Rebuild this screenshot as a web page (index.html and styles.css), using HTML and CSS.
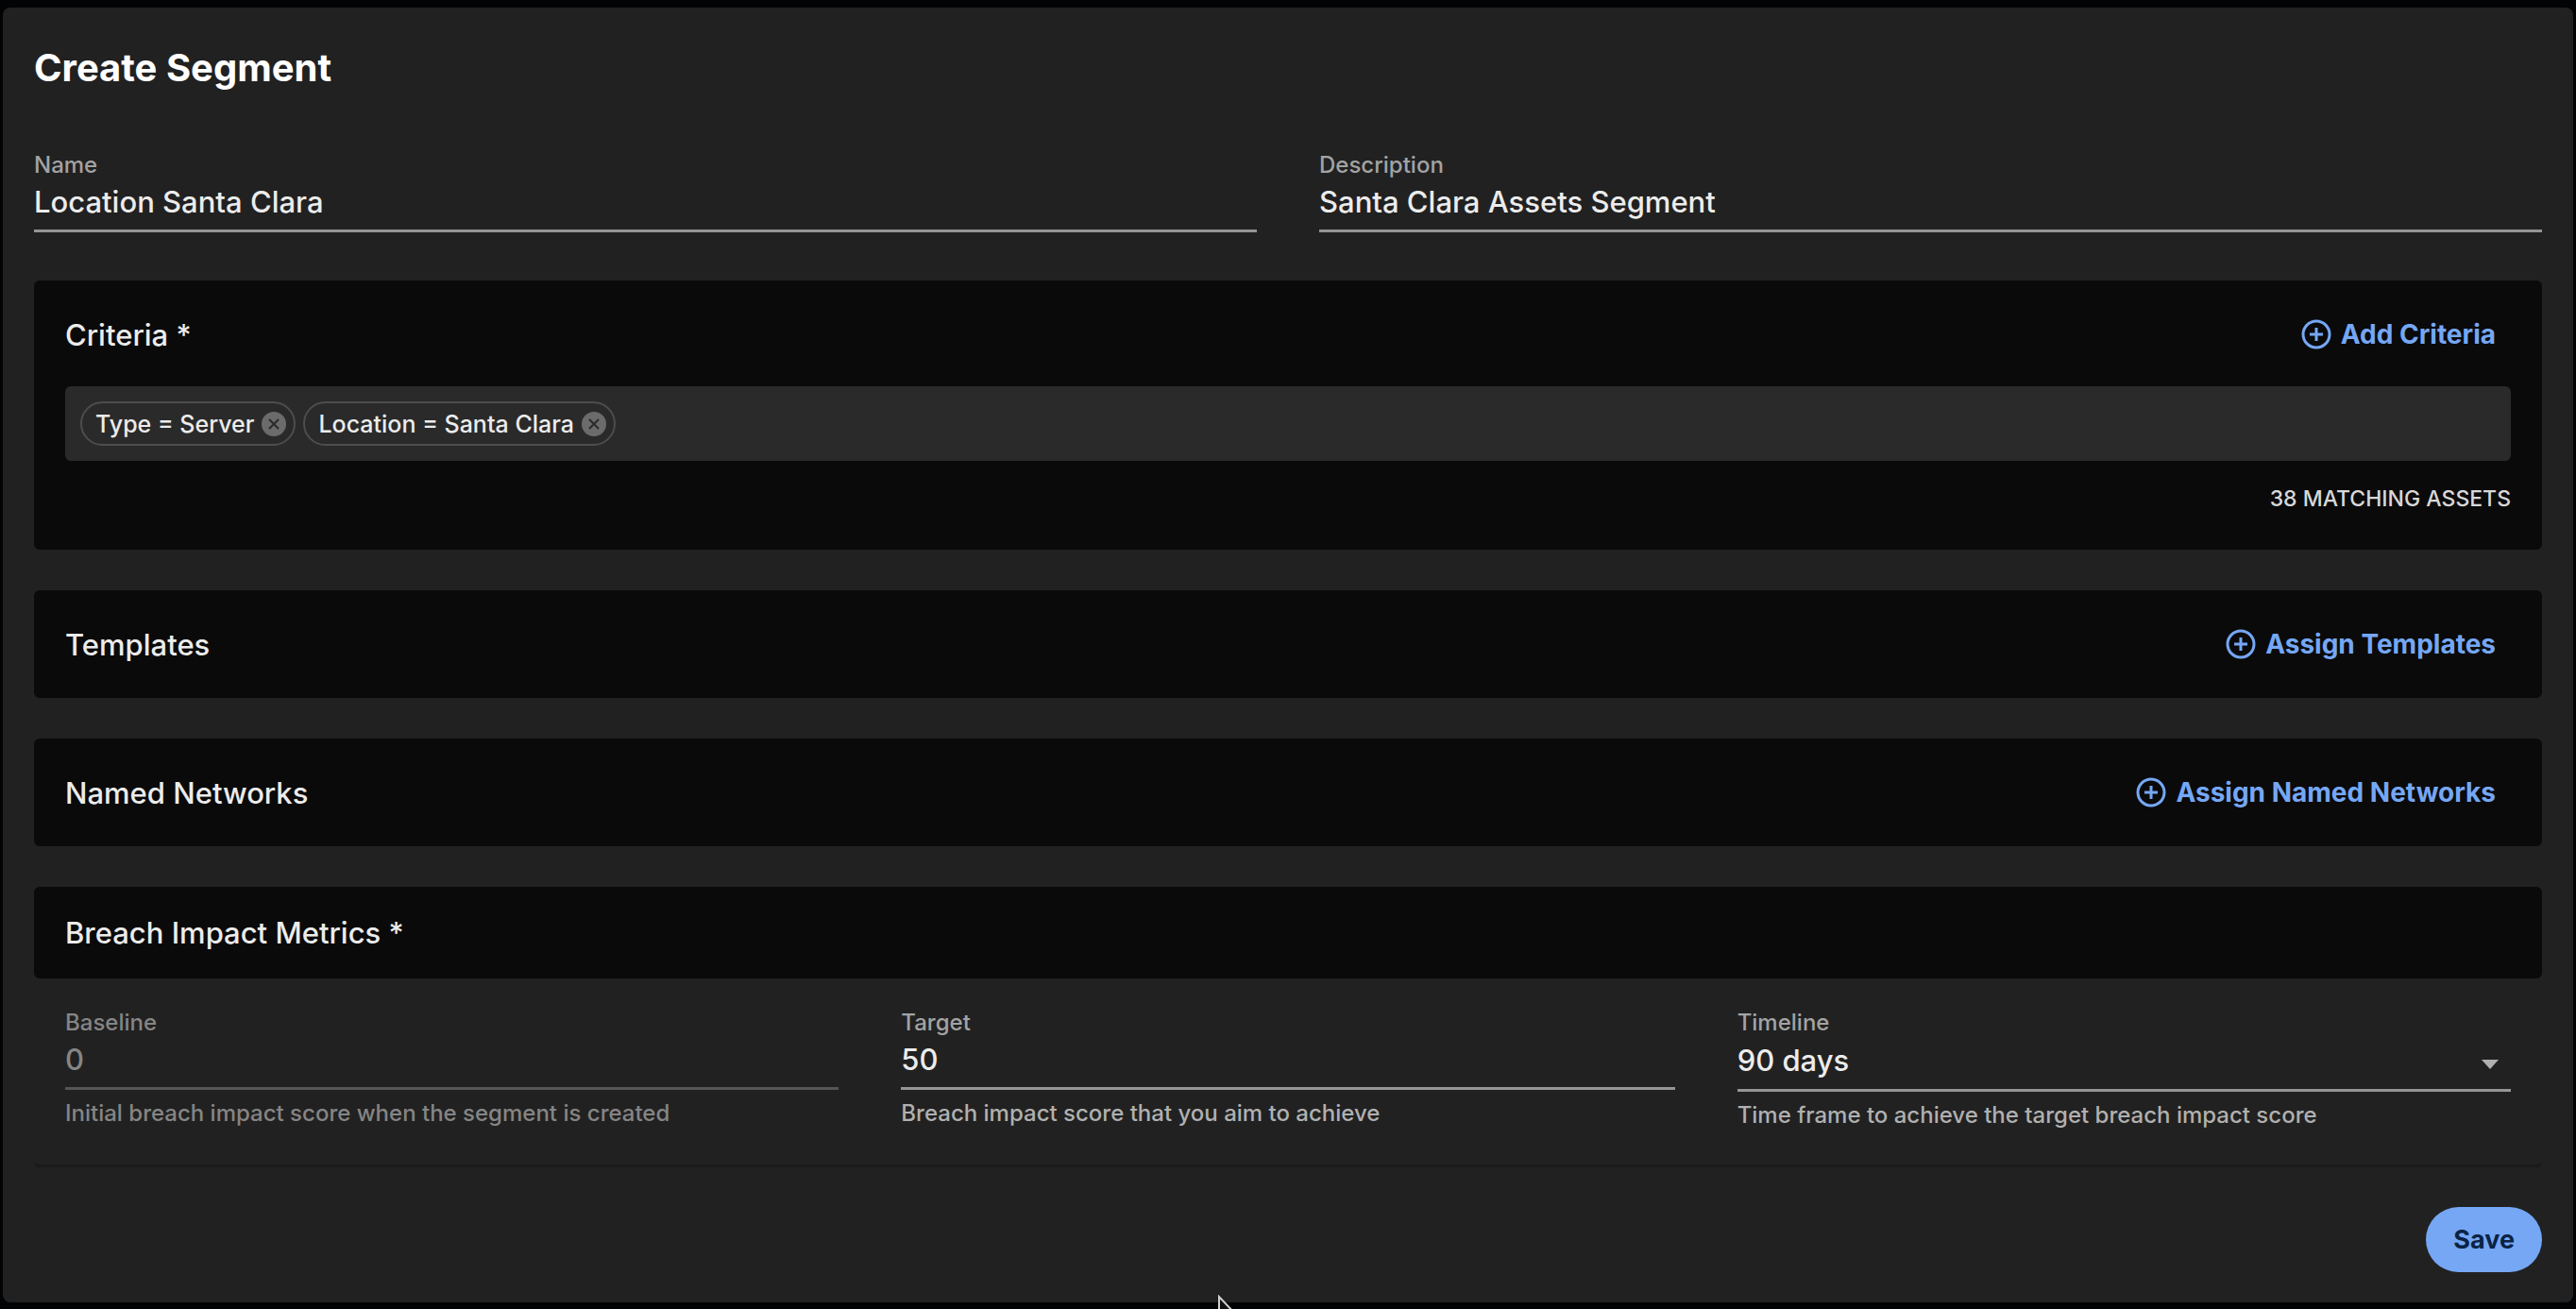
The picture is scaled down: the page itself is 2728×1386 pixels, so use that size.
FILE: index.html
```html
<!DOCTYPE html>
<html lang="en">
<head>
    <meta charset="UTF-8">
    <meta name="viewport" content="width=device-width, initial-scale=1.0">
    <title>Create Segment</title>
    <link rel="stylesheet" href="styles.css">
</head>
<body>
    <form class="panel">
        <h1>Create Segment</h1>

        <div class="fields details">
            <div class="field">
                <label for="name">Name</label>
                <input type="text" id="name" value="Location Santa Clara">
            </div>
            <div class="field">
                <label for="description">Description</label>
                <input type="text" id="description" value="Santa Clara Assets Segment">
            </div>
        </div>

        <!-- Criteria -->
        <section class="card">
            <div class="card-header">
                <h2>Criteria *</h2>
                <button type="button" class="link-button">
                    <svg class="plus-icon" viewBox="0 0 32 32"><circle cx="16" cy="16" r="14"/><path d="M16 9v14M9 16h14"/></svg>
                    Add Criteria
                </button>
            </div>
            <div class="chips">
                <span class="chip">
                    Type = Server
                    <button type="button" class="chip-remove" aria-label="Remove type">
                        <svg viewBox="0 0 26 26"><circle cx="13" cy="13" r="13"/><path d="M8 8l10 10M18 8L8 18"/></svg>
                    </button>
                </span>
                <span class="chip">
                    Location = Santa Clara
                    <button type="button" class="chip-remove" aria-label="Remove location">
                        <svg viewBox="0 0 26 26"><circle cx="13" cy="13" r="13"/><path d="M8 8l10 10M18 8L8 18"/></svg>
                    </button>
                </span>
            </div>
            <p class="match-count">38 MATCHING ASSETS</p>
        </section>

        <!-- Templates -->
        <section class="card">
            <div class="card-header">
                <h2>Templates</h2>
                <button type="button" class="link-button">
                    <svg class="plus-icon" viewBox="0 0 32 32"><circle cx="16" cy="16" r="14"/><path d="M16 9v14M9 16h14"/></svg>
                    Assign Templates
                </button>
            </div>
        </section>

        <!-- Named Networks -->
        <section class="card">
            <div class="card-header">
                <h2>Named Networks</h2>
                <button type="button" class="link-button">
                    <svg class="plus-icon" viewBox="0 0 32 32"><circle cx="16" cy="16" r="14"/><path d="M16 9v14M9 16h14"/></svg>
                    Assign Named Networks
                </button>
            </div>
        </section>

        <!-- Breach Impact Metrics -->
        <section class="metrics">
            <div class="card compact">
                <h2>Breach Impact Metrics *</h2>
            </div>
            <div class="fields metrics-fields">
                <div class="field disabled">
                    <label for="baseline">Baseline</label>
                    <input type="text" id="baseline" value="0" disabled>
                    <p class="hint">Initial breach impact score when the segment is created</p>
                </div>
                <div class="field">
                    <label for="target">Target</label>
                    <input type="text" id="target" value="50">
                    <p class="hint">Breach impact score that you aim to achieve</p>
                </div>
                <div class="field">
                    <label for="timeline">Timeline</label>
                    <div class="select-wrap">
                        <select id="timeline">
                            <option>90 days</option>
                        </select>
                        <svg class="arrow" viewBox="0 0 18 10"><path d="M0 0h18l-9 10z"/></svg>
                    </div>
                    <p class="hint">Time frame to achieve the target breach impact score</p>
                </div>
            </div>
        </section>

        <div class="actions">
            <button type="submit" class="save-button">Save</button>
        </div>
    </form>

    <svg class="cursor" viewBox="0 0 24 36"><path d="M2 2v26l6-5 5 11 4-2-5-11h8z"/></svg>
</body>
</html>
```

FILE: styles.css
```css
* {
    box-sizing: border-box;
}

body {
    font-family: "Inter", sans-serif;
    font-weight: 500;
    margin: 0;
    padding: 8px 3px 7px;
    min-height: 100vh;
    background: #020305;
    color: #ececec;
    position: relative;
    overflow: hidden;
}

h1, h2, p {
    margin: 0;
}

button, input, select {
    font-family: inherit;
    font-weight: inherit;
    color: inherit;
}

.panel {
    background: #212121;
    border-radius: 8px;
    padding: 40px 33px 32px;
}

h1 {
    font-size: 40px;
    line-height: 48px;
    font-weight: 700;
    color: #fff;
}

h2 {
    font-size: 31px;
    line-height: 49px;
    font-weight: 500;
}

/* Form fields */
.fields {
    display: grid;
    gap: 66px;
}

.details {
    grid-template-columns: 1fr 1fr;
    margin: 64px 0 51px;
}

.field label {
    display: block;
    font-size: 24px;
    line-height: 30px;
    color: #a3a3a3;
}

.field input,
.field select {
    display: block;
    width: 100%;
    height: 56px;
    padding: 0 0 6px;
    border: none;
    border-bottom: 3px solid #959595;
    border-radius: 0;
    background: transparent;
    font-size: 31px;
    outline: none;
    appearance: none;
}

.field select {
    height: 58px;
}

.hint {
    margin-top: 10px;
    font-size: 24px;
    line-height: 30px;
    color: #b0b0b0;
}

.disabled label,
.disabled input,
.disabled .hint {
    color: #858585;
}

.disabled input {
    border-bottom-color: #555;
}

.select-wrap {
    position: relative;
}

.arrow {
    position: absolute;
    right: 13px;
    top: 24px;
    width: 18px;
    height: 10px;
    fill: #b0b0b0;
    pointer-events: none;
}

/* Cards */
.card {
    background: #0a0a0a;
    border-radius: 6px;
    padding: 32px 33px;
    margin-bottom: 43px;
}

.card-header {
    display: flex;
    justify-content: space-between;
    align-items: center;
}

.link-button {
    display: flex;
    align-items: center;
    gap: 10px;
    height: 50px;
    padding: 0 16px;
    border: none;
    background: transparent;
    color: #75a7f5;
    font-size: 28px;
    font-weight: 700;
    cursor: pointer;
}

.plus-icon {
    width: 32px;
    height: 32px;
    fill: none;
    stroke: #75a7f5;
    stroke-width: 3;
}

.chips {
    display: flex;
    gap: 8px;
    margin-top: 30px;
    padding: 16px;
    background: #2a2a2a;
    border-radius: 6px;
}

.chip {
    display: flex;
    align-items: center;
    gap: 8px;
    height: 47px;
    padding: 0 8px 0 14px;
    border: 2px solid #4d4d4d;
    border-radius: 24px;
    font-size: 25px;
}

.chip-remove {
    display: flex;
    padding: 0;
    border: none;
    background: transparent;
    cursor: pointer;
}

.chip-remove svg {
    width: 26px;
    height: 26px;
    fill: #6b6b6b;
    stroke: none;
}

.chip-remove path {
    stroke: #2a2a2a;
    stroke-width: 2;
}

.match-count {
    margin: 22px 0 4px;
    font-size: 23px;
    line-height: 36px;
    text-align: right;
    color: #d8d8d8;
}

/* Metrics */
.compact {
    padding: 24px 33px;
    margin: 0;
}

.metrics {
    border-bottom: 3px solid #1a1a1a;
    border-radius: 6px;
}

.metrics-fields {
    grid-template-columns: repeat(3, 1fr);
    padding: 32px 33px 37px;
}

.actions {
    display: flex;
    justify-content: flex-end;
    margin-top: 42px;
}

.save-button {
    height: 69px;
    padding: 0 29px;
    border: none;
    border-radius: 35px;
    background: #75a7f5;
    color: #0b2344;
    font-size: 27px;
    font-weight: 700;
    cursor: pointer;
}

/* Mouse pointer at the bottom edge */
.cursor {
    position: absolute;
    left: 1289px;
    top: 1371px;
    width: 24px;
    height: 36px;
    fill: #111;
    stroke: #d0d0d0;
    stroke-width: 2;
}
```
